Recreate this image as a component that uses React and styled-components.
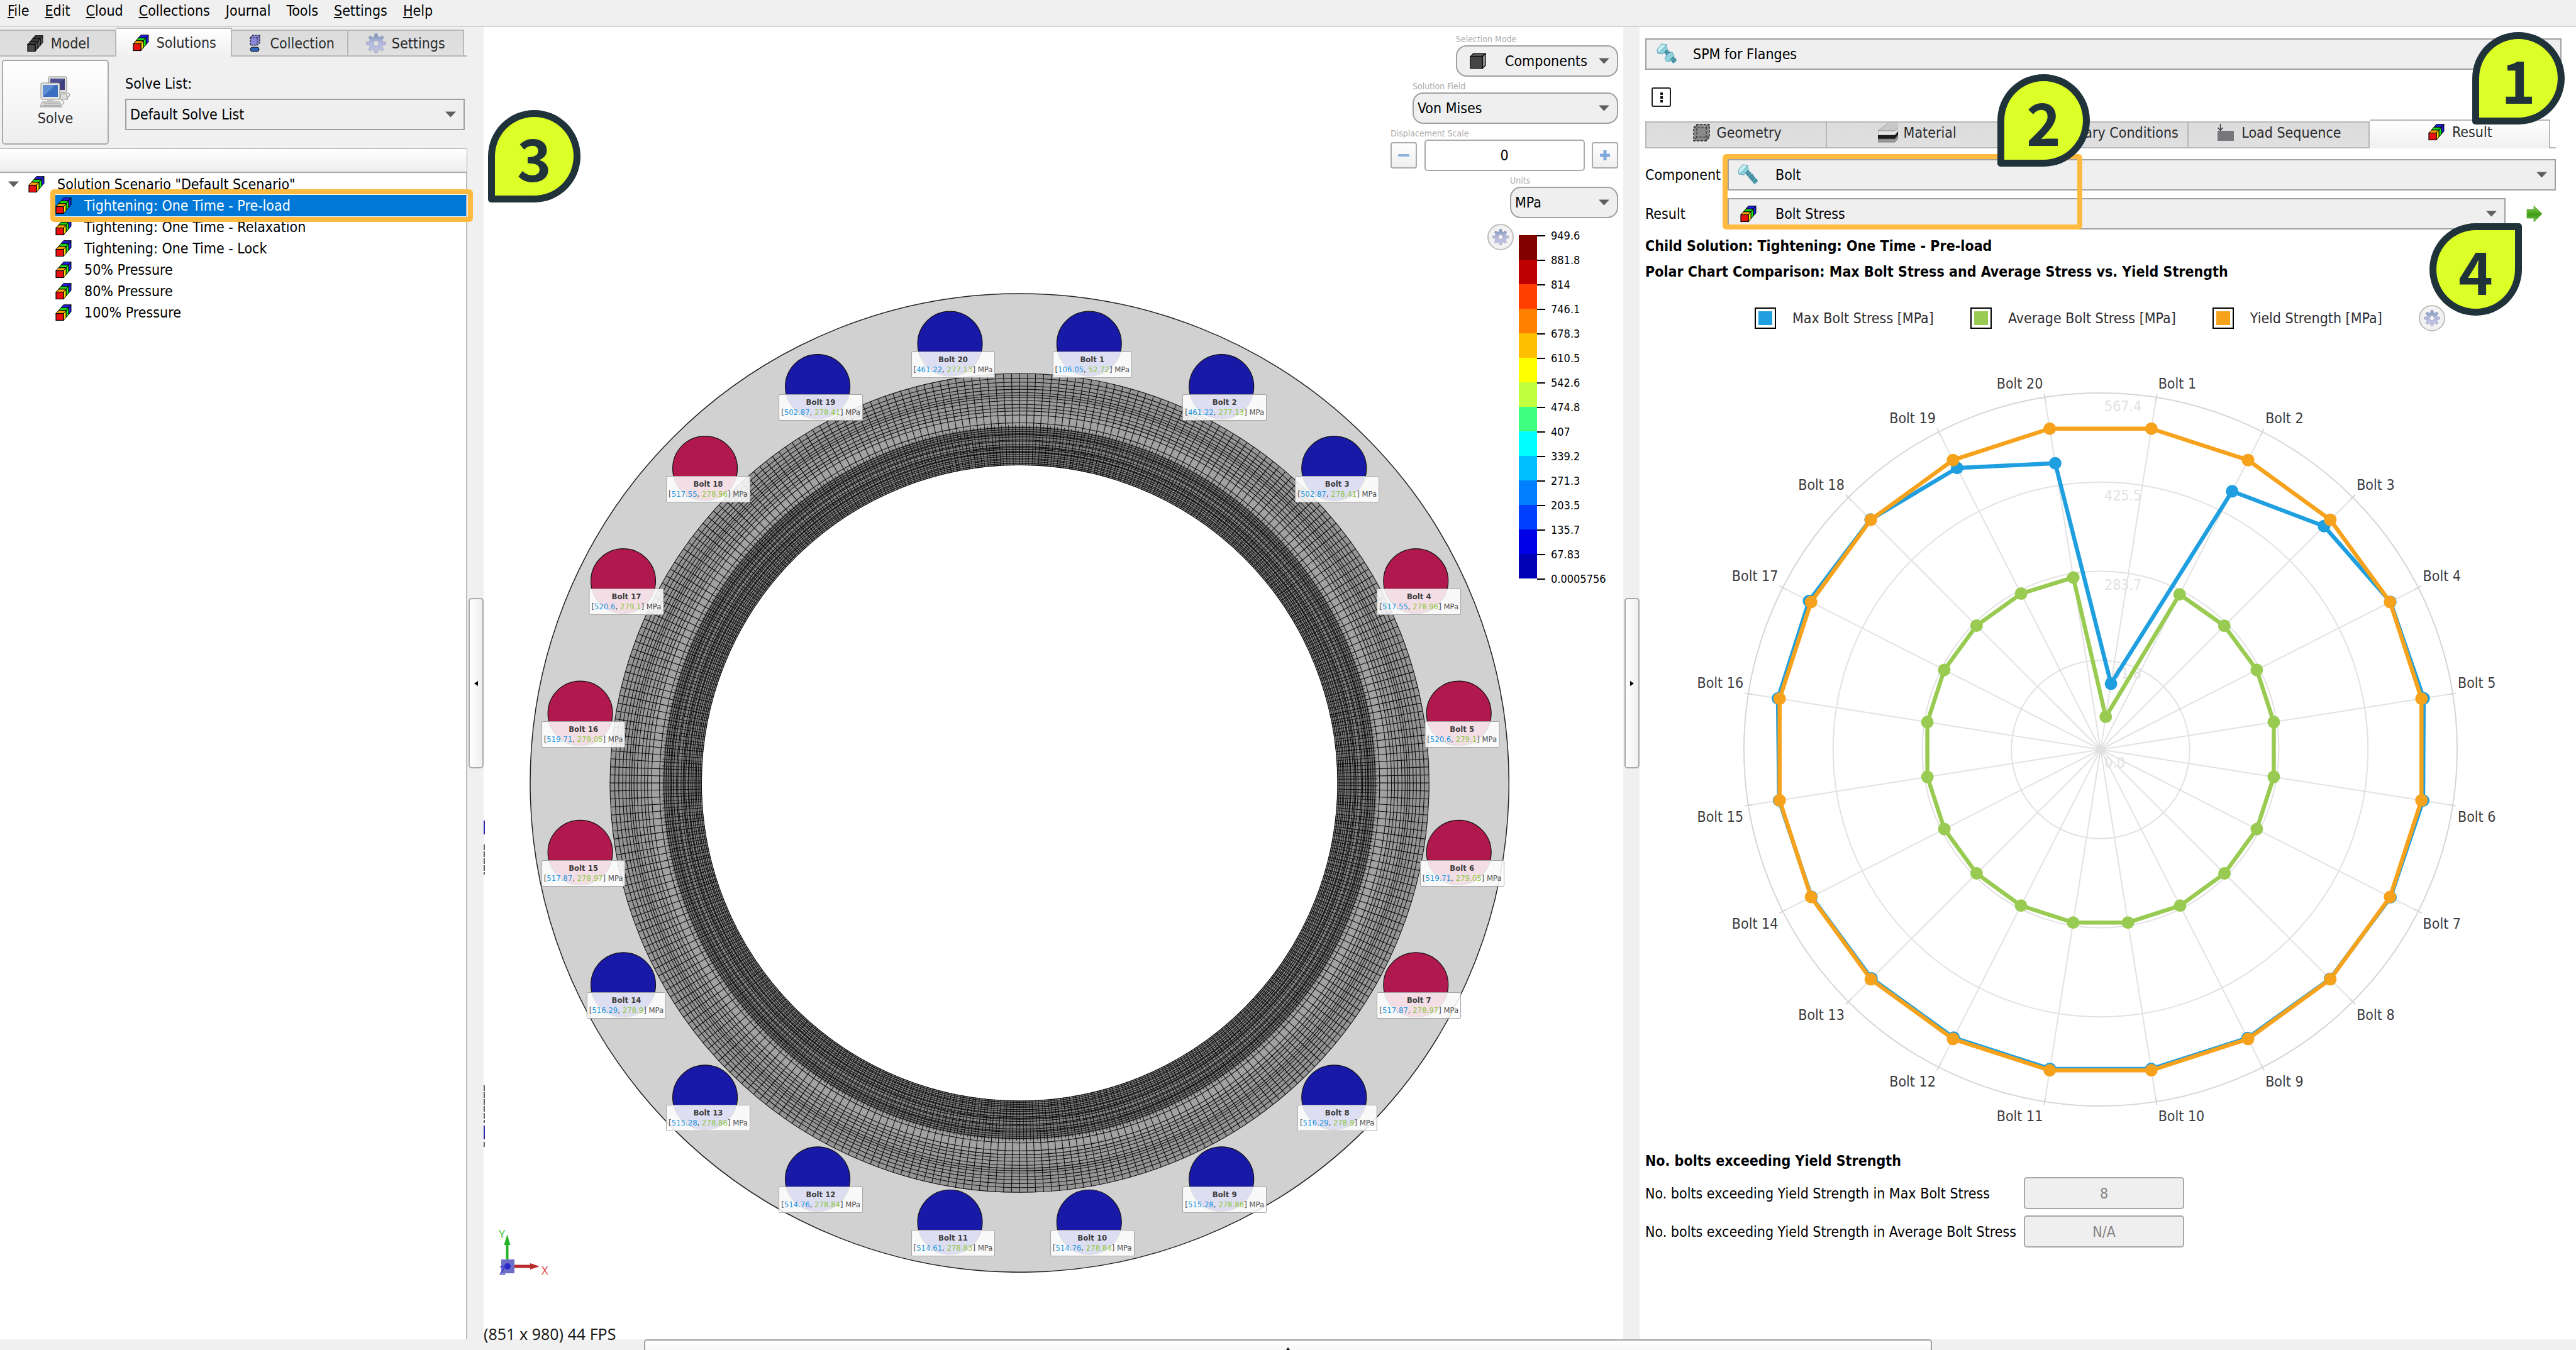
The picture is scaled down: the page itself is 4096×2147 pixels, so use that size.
import React, { useState } from "react";
import styled, { createGlobalStyle, css } from "styled-components";

const FONT = '"DejaVu Sans Condensed", "DejaVu Sans", "Noto Sans", sans-serif';

const GlobalStyle = createGlobalStyle`
  *, *::before, *::after { box-sizing: border-box; }
  body { margin: 0; background: #f0f0f0; }
  body, button, input, select {
    font-family: ${FONT};
    font-size: 23px;
    line-height: 34px;
    color: #000;
  }
`;

/* ---------- data ---------- */

const MAX = [106.05, 461.22, 502.87, 517.55, 520.6, 519.71, 517.87, 516.29, 515.28, 514.76,
  514.61, 514.76, 515.28, 516.29, 517.87, 519.71, 520.6, 517.55, 502.87, 461.22];
const AVG = [52.72, 277.13, 278.41, 278.96, 279.1, 279.05, 278.97, 278.9, 278.86, 278.84,
  278.83, 278.84, 278.86, 278.9, 278.97, 279.05, 279.1, 278.96, 278.41, 277.13];
const YIELD = 517;
const AXIS_MAX = 567.4;
const BOLTS = MAX.map((max, i) => ({
  name: `Bolt ${i + 1}`,
  max,
  avg: AVG[i],
  angle: ((i + 0.5) * 18 * Math.PI) / 180,
}));

const BLUE = "#1f9fdf";
const GREEN = "#99cb52";
const ORANGE = "#f6a21c";

const SCALE = [
  ["949.6", "#800000"], ["881.8", "#bf0000"], ["814", "#ff4000"], ["746.1", "#ff8000"],
  ["678.3", "#ffbf00"], ["610.5", "#ffff00"], ["542.6", "#bfff40"], ["474.8", "#40ff80"],
  ["407", "#00ffff"], ["339.2", "#00bfff"], ["271.3", "#0080ff"], ["203.5", "#0040ff"],
  ["135.7", "#0000e6"], ["67.83", "#0000b4"],
];

/* ---------- icons ---------- */

const CUBE_COLORS = {
  rainbow: { front: "#e81010", segs: [["#ffa800", "#ffe000"], ["#18d818", "#18f018"], ["#2020e0", "#2020e0"]] },
  dark: { front: "#474747", segs: [["#3c3c3c", "#5a5a5a"], ["#3c3c3c", "#5a5a5a"], ["#3c3c3c", "#5a5a5a"]] },
};

function CubesIcon({ variant = "rainbow" }) {
  const c = CUBE_COLORS[variant];
  return (
    <svg width="32" height="32" viewBox="-3 -3 32 32" aria-hidden="true">
      {[2, 1, 0].map((i) => {
        const x = 1 + i * 4;
        const y = 14.5 - i * 4.6;
        return (
          <g key={i} stroke="#000" strokeWidth="1" strokeLinejoin="round">
            <path d={`M${x} ${y}l4 -4.6h12l-4 4.6z`} fill={c.segs[i][0]} />
            <path d={`M${x + 12} ${y}l4 -4.6v11l-4 4.6z`} fill={c.segs[i][1]} />
          </g>
        );
      })}
      <rect x="1" y="14.5" width="12" height="11" fill={c.front} stroke="#000" strokeWidth="1.2" />
    </svg>
  );
}

function CollectionIcon() {
  return (
    <svg width="32" height="32" viewBox="0 0 32 32" aria-hidden="true">
      <path d="M9 7l4-4h11v12l-4 4H9z" fill="#8a86dc" stroke="#000" strokeWidth="1.2" strokeDasharray="3 1.6" />
      <path d="M9 7h11l4-4M20 7v12" fill="none" stroke="#222" strokeWidth="1" strokeDasharray="3 1.6" />
      <rect x="9" y="22" width="14" height="7" rx="3.5" fill="#2e62b4" stroke="#111" strokeWidth="1" />
    </svg>
  );
}

function gearPath(c, outer, inner, teeth) {
  const pts = [];
  for (let i = 0; i < teeth; i += 1) {
    [[-0.32, inner], [-0.17, outer], [0.17, outer], [0.32, inner]].forEach(([o, r]) => {
      const a = ((i + o) * 2 * Math.PI) / teeth - Math.PI / 2;
      pts.push(`${(c + r * Math.cos(a)).toFixed(2)} ${(c + r * Math.sin(a)).toFixed(2)}`);
    });
  }
  return `M${pts.join("L")}Z`;
}

function GearIcon({ size = 32 }) {
  return (
    <svg width={size} height={size} viewBox="0 0 32 32" aria-hidden="true">
      <defs>
        <linearGradient id="gear" x1="0" y1="0" x2="0" y2="1">
          <stop offset="0" stopColor="#7b92b8" />
          <stop offset="0.45" stopColor="#b0b8da" />
          <stop offset="1" stopColor="#cac4e6" />
        </linearGradient>
      </defs>
      <path
        fillRule="evenodd"
        d={`${gearPath(16, 15.4, 11, 8)}M16 11.5a4.5 4.5 0 1 0 .01 0Z`}
        fill="url(#gear)"
        stroke="#949cbc"
        strokeWidth="0.8"
      />
    </svg>
  );
}

function ComputersIcon() {
  return (
    <svg width="50" height="50" viewBox="0 0 50 50" aria-hidden="true">
      <path d="M34 28l8 0 3 9H32z" fill="#dcdcd8" stroke="#8c8c88" />
      <path d="M43 27c6 0 6 6 1 6" fill="none" stroke="#aaa" strokeWidth="1.5" />
      <rect x="14" y="1" width="29" height="25" rx="2" fill="#dcdcd8" stroke="#8c8c88" />
      <rect x="17" y="4" width="23" height="18" fill="#3d3d80" />
      <path d="M17 22V4h23z" fill="#5c5ca0" opacity="0.6" />
      <path d="M4 41h28l3 8H1z" fill="#dcdcd8" stroke="#8c8c88" />
      <path d="M6 44h25M5 46.5h27" stroke="#999" />
      <path d="M34 39c6 0 6 6 1 6" fill="none" stroke="#aaa" strokeWidth="1.5" />
      <rect x="2" y="11" width="30" height="26" rx="2" fill="#e6e6e2" stroke="#8c8c88" />
      <rect x="5" y="14" width="24" height="19" fill="#3a6fc0" />
      <path d="M5 33V14h20z" fill="#7ba4e0" opacity="0.6" />
      <path d="M12 37h10v4H12z" fill="#c4c4c0" />
    </svg>
  );
}

function BoltIcon({ nut = false }) {
  return (
    <svg width="34" height="34" viewBox="0 0 34 34" aria-hidden="true">
      <g stroke="#4f9db0" strokeWidth="0.8" strokeLinejoin="round">
        <path d="M11 13l5-4 16 18-5 5z" fill="#5aa5b8" />
        <path d="M1 10L8 1l8 1 1 7-7 8-8-1z" fill="#8fd0dc" />
        <path d="M8 1l8 1-8 9-6 5-1-6z" fill="#c6edf2" />
      </g>
      {nut && <path d="M13 24l5-9 7-1 3 6-5 8-7 1z" fill="#8fd0dc" stroke="#4f9db0" strokeWidth="0.8" />}
      <path d="M22 26l6-5M25 29l6-5" stroke="#2f7486" strokeWidth="1.3" />
      <path d="M13 15l5-5M15 18l6-5" stroke="#2f7486" strokeWidth="1.3" />
      {!nut && <path d="M18 21l6-5M20 23.500l6-5" stroke="#2f7486" strokeWidth="1.3" />}
    </svg>
  );
}

function GeometryIcon() {
  return (
    <svg width="32" height="32" viewBox="0 0 32 32" aria-hidden="true">
      <path d="M4 8l5-5h20v20l-5 6H4z" fill="#8a8a8a" stroke="#222" strokeWidth="1.4" strokeDasharray="4 2" />
      <path d="M4 8h20l5-5M24 8v21M9 3v20h20M9 23l-5 6" fill="none" stroke="#333" strokeWidth="1.2" strokeDasharray="4 2" />
    </svg>
  );
}

function MaterialIcon() {
  return (
    <svg width="32" height="32" viewBox="0 0 32 32" aria-hidden="true">
      <path d="M0 13L17 0h15v8l-5 5z" fill="#c8c8c8" />
      <path d="M0 13L17 0" stroke="#999" strokeWidth="0.8" />
      <path d="M0 13h27l5-5v6l-5 6H0z" fill="#e6e6e6" stroke="#777" strokeWidth="0.8" />
      <path d="M0 20h27l5-6v6l-5 6H0z" fill="#1c1c1c" />
      <path d="M0 26h27l5-6v5l-5 6H0z" fill="#9a9a9a" stroke="#666" strokeWidth="0.8" />
    </svg>
  );
}

function LoadIcon() {
  return (
    <svg width="32" height="32" viewBox="0 0 32 32" aria-hidden="true">
      <rect x="3" y="13" width="26" height="16" fill="#77777b" />
      <path d="M7.500 2v10M3.500 8l4 4.500 4-4.500" fill="none" stroke="#333" strokeWidth="1.4" />
    </svg>
  );
}

function BoxIcon() {
  return (
    <svg width="26" height="26" viewBox="0 0 26 26" aria-hidden="true">
      <g stroke="#000" strokeWidth="1.2" strokeLinejoin="round">
        <path d="M1 6l5-5h19l-5 5z" fill="#555" />
        <path d="M20 6l5-5v19l-5 5z" fill="#8a8a8a" />
        <path d="M1 6h19v19H1z" fill="#444" />
      </g>
    </svg>
  );
}

function GoIcon() {
  return (
    <svg width="26" height="26" viewBox="0 0 26 26" aria-hidden="true">
      <defs>
        <linearGradient id="go" x1="0" y1="0" x2="0" y2="1">
          <stop offset="0" stopColor="#8ed05a" />
          <stop offset="0.55" stopColor="#3c9c14" />
          <stop offset="1" stopColor="#7cc850" />
        </linearGradient>
      </defs>
      <path d="M1 6h11V0l13 13-13 13v-6H1z" fill="url(#go)" stroke="#5fae38" strokeWidth="0.8" />
    </svg>
  );
}

const ArrowSvg = styled.svg`
  flex: none;
  pointer-events: none;
`;

function DownArrow() {
  return (
    <ArrowSvg width="17" height="10" viewBox="0 0 17 10" aria-hidden="true">
      <path d="M0 0.500h17L8.500 9.500z" fill="#5e5e5e" />
    </ArrowSvg>
  );
}

/* ---------- shell ---------- */

const Shell = styled.div`
  min-height: 100vh;
  display: flex;
  flex-direction: column;
  background: #f0f0f0;
`;

const MenuBar = styled.nav`
  display: flex;
  gap: 25px;
  padding: 0 12px 7px;
  border-bottom: 2px solid #d4d4d4;
`;

const MenuItem = styled.button`
  padding: 0;
  border: 0;
  background: none;
  &::first-letter { text-decoration: ${(p) => (p.$plain ? "none" : "underline")}; }
`;

const Columns = styled.main`
  flex: 1;
  display: grid;
  grid-template-columns: minmax(0, 743fr) 26px minmax(0, 1812fr) 26px minmax(0, 1489fr);
`;

const Gutter = styled.div`
  display: flex;
  flex-direction: column;
  justify-content: center;
  align-items: flex-end;
`;

const GutterHandle = styled.button`
  width: 24px;
  height: 271px;
  padding: 0;
  display: grid;
  place-items: center;
  border: 2px solid #aaa;
  border-radius: 5px;
  background: linear-gradient(90deg, #fff, #efefef);
`;

const BottomBar = styled.footer`
  height: 17px;
  display: flex;
  justify-content: center;
`;

const BottomHandle = styled.button`
  width: 50%;
  padding: 0;
  display: grid;
  place-items: end center;
  border: 2px solid #a0a0a0;
  border-bottom: 0;
  border-radius: 5px 5px 0 0;
  background: linear-gradient(#fff, #f6f6f6);
`;

/* ---------- annotations ---------- */

const Badge = styled.span`
  position: absolute;
  z-index: 5;
  width: 147px;
  height: 147px;
  display: grid;
  place-items: center;
  border: 11px solid #20333b;
  border-radius: ${(p) => (p.$corner === "top" ? "50% 5px 50% 50%" : "50% 50% 50% 5px")};
  background: #dcff28;
  color: #20333b;
  font-family: "Noto Sans CJK SC", "Noto Sans", sans-serif;
  font-weight: 700;
  font-size: 93px;
  line-height: 93px;
`;

const BadgeOne = styled(Badge)` top: 8px; right: 18px; `;
const BadgeTwo = styled(Badge)` top: 75px; left: 569px; `;
const BadgeThree = styled(Badge)` top: 132px; left: 7px; `;
const BadgeFour = styled(Badge)` top: 312px; right: 86px; `;

const Highlight = styled.span`
  position: absolute;
  z-index: 3;
  border: 8px solid #ffbb40;
  border-radius: 6px;
  pointer-events: none;
`;

/* ---------- shared controls ---------- */

const TabBar = styled.div`
  display: flex;
  align-items: flex-end;
  height: 46px;
  padding-right: ${(p) => p.$end}px;
  border-bottom: 2px solid #b8b8b8;
`;

const Tab = styled.button`
  flex: 1;
  min-width: 0;
  height: 41px;
  padding: 0 0 ${(p) => p.$lift || 0}px;
  display: flex;
  align-items: center;
  justify-content: center;
  gap: 9px;
  border: solid #b8b8b8;
  border-width: 2px 2px 0 0;
  background: linear-gradient(#dcdcdc, #e0e0e0);
  color: #2b2b2b;
  white-space: nowrap;
  svg { flex: none; }
  ${(p) => p.$first && css`border-left-width: 2px;`}
  ${(p) => p.$active && css`
    height: 46px;
    margin-bottom: -2px;
    background: linear-gradient(#fff, #f0f0f0);
  `}
`;

const SelectBox = styled.div`
  display: flex;
  align-items: center;
  height: 50px;
  width: 100%;
  padding: 0 12px 0 ${(p) => p.$pad || 6}px;
  border: 2px solid #a0a0a0;
  background: #efefef;
  ${(p) => p.$round && css`border-radius: 17px;`}
`;

const SelectIcon = styled.span`
  display: flex;
  flex: none;
  margin-right: ${(p) => p.$gap}px;
`;

const Select = styled.select`
  flex: 1;
  min-width: 0;
  height: 100%;
  padding: 0;
  border: 0;
  background: none;
  appearance: none;
`;

function IconSelect({ id, label, value, icon, gap, ...box }) {
  return (
    <SelectBox {...box}>
      {icon && <SelectIcon $gap={gap}>{icon}</SelectIcon>}
      <Select id={id} aria-label={label} defaultValue={value}>
        <option>{value}</option>
      </Select>
      <DownArrow />
    </SelectBox>
  );
}

/* ---------- left panel ---------- */

const LeftPanel = styled.section`
  display: flex;
  flex-direction: column;
  padding-top: 1px;
`;

const SolveRow = styled.div`
  display: flex;
  gap: 26px;
  padding: 5px 4px 6px 3px;
`;

const SolveButton = styled.button`
  width: 170px;
  height: 135px;
  padding: 0;
  display: flex;
  flex-direction: column;
  align-items: center;
  justify-content: center;
  border: 2px solid #aaa;
  border-radius: 5px;
  background: linear-gradient(#fff, #eee);
  color: #2b2b2b;
`;

const SolveList = styled.div`
  flex: 1;
  display: flex;
  flex-direction: column;
  gap: 7px;
  padding-top: 21px;
`;

const TreeHeader = styled.div`
  height: 39px;
  border: solid #a8a8a8;
  border-width: 1px 1px 2px 0;
  background: linear-gradient(#fff, #eee);
`;

const Tree = styled.ul`
  flex: 1;
  margin: 0;
  padding: 1px 0 0;
  list-style: none;
  border-right: 2px solid #bcbcbc;
  background: #fff;
`;

const TreeItem = styled.li`
  position: relative;
  padding-left: ${(p) => (p.$root ? 15 : 87)}px;
`;

const TreeRow = styled.button`
  width: 100%;
  height: 34px;
  padding: 0;
  display: flex;
  align-items: center;
  gap: 17px;
  border: 0;
  text-align: left;
  background: ${(p) => (p.$selected ? "#0078d7" : "none")};
  color: ${(p) => (p.$selected ? "#fff" : "#000")};
  svg + svg { margin-left: -5px; }
  svg { margin-left: -2px; }
`;

const TreeHighlight = styled(Highlight)` inset: -9px -11px -9px 80px; `;

const STEPS = ["Tightening: One Time - Pre-load", "Tightening: One Time - Relaxation",
  "Tightening: One Time - Lock", "50% Pressure", "80% Pressure", "100% Pressure"];

function Left() {
  const [selected, setSelected] = useState(0);
  return (
    <LeftPanel>
      <TabBar role="tablist" $end={5}>
        <Tab role="tab"><CubesIcon variant="dark" />Model</Tab>
        <Tab role="tab" $active aria-selected="true"><CubesIcon />Solutions</Tab>
        <Tab role="tab"><CollectionIcon />Collection</Tab>
        <Tab role="tab"><GearIcon />Settings</Tab>
      </TabBar>
      <SolveRow>
        <SolveButton><ComputersIcon />Solve</SolveButton>
        <SolveList>
          <label htmlFor="solve-list">Solve List:</label>
          <IconSelect id="solve-list" value="Default Solve List" />
        </SolveList>
      </SolveRow>
      <TreeHeader />
      <Tree>
        <TreeItem $root>
          <TreeRow>
            <DownArrow />
            <CubesIcon />
            Solution Scenario "Default Scenario"
          </TreeRow>
        </TreeItem>
        {STEPS.map((s, i) => (
          <TreeItem key={s}>
            <TreeRow $selected={selected === i} onClick={() => setSelected(i)}>
              <CubesIcon />
              {s}
            </TreeRow>
            {i === 0 && <TreeHighlight />}
          </TreeItem>
        ))}
      </Tree>
    </LeftPanel>
  );
}

/* ---------- 3D viewport ---------- */

const Viewport = styled.section`
  position: relative;
  display: flex;
  flex-direction: column;
  background: #fff;
`;

const Stage = styled.div`
  position: relative;
  width: 86%;
  margin: 423px 0 0 73px;
  aspect-ratio: 1;
`;

const StageSvg = styled.svg`
  display: block;
  width: 100%;
  height: 100%;
`;

const BoltTag = styled.div`
  position: absolute;
  display: flex;
  flex-direction: column;
  align-items: center;
  margin: 12px 0 0 5px;
  padding: 4px 3px;
  transform: translateX(-50%);
  border: 1px solid #a4a4a4;
  border-radius: 2px;
  background: rgba(255, 255, 255, 0.86);
  color: #505050;
  font-size: 13px;
  line-height: 16px;
  white-space: nowrap;
  strong { color: #3c3c3c; }
`;

const Value = styled.span`
  color: ${(p) => p.$color};
`;

const RINGS = [385, 391, 398, 405, 410, 418, 425, 433, 436, 445, 451, 455, 463, 475, 480, 492, 500,
  504, 512, 520, 528, 545, 575, 590, 602, 615, 630, 642, 651, 660, 673, 685, 700, 715, 733]
  .map((x) => 345.3 + x * 0.4182);

const BANDS = [[652, "#959595"], [612, "#9a9a9a"], [592, "#a2a2a2"], [568, "#7c7c7c"], [544, "#868686"]];

function radials(count, r1, r2, phase) {
  let d = "";
  for (let i = 0; i < count; i += 1) {
    const a = ((i + phase) * 2 * Math.PI) / count;
    const s = Math.sin(a);
    const c = Math.cos(a);
    d += `M${(r1 * s).toFixed(1)} ${(-r1 * c).toFixed(1)}L${(r2 * s).toFixed(1)} ${(-r2 * c).toFixed(1)}`;
  }
  return d;
}

function Flange() {
  return (
    <Stage>
      <StageSvg viewBox="-780 -780 1560 1560" role="img" aria-label="Flange mesh">
        <circle r="779" fill="#d1d1d1" stroke="#222" strokeWidth="1.500" />
        {BANDS.map(([r, fill]) => <circle key={r} r={r} fill={fill} />)}
        <circle r="506" fill="#fff" />
        <g fill="none" stroke="#000" strokeWidth="1.1" opacity="0.9">
          {RINGS.map((r) => <circle key={r} r={r} />)}
          <path d={radials(320, 506, 652, 0)} />
          <path d={radials(320, 506, 570, 0.42)} opacity="0.8" />
        </g>
        {BOLTS.map((b) => (
          <circle
            key={b.name}
            cx={708 * Math.sin(b.angle)}
            cy={-708 * Math.cos(b.angle)}
            r="51.500"
            fill={b.max > YIELD ? "#b0184e" : "#1919a8"}
            stroke="#111"
            strokeWidth="1.200"
          />
        ))}
      </StageSvg>
      {BOLTS.map((b) => (
        <BoltTag
          key={b.name}
          style={{
            left: `${50 + 45.385 * Math.sin(b.angle)}%`,
            top: `${50 - 45.385 * Math.cos(b.angle)}%`,
          }}
        >
          <strong>{b.name}</strong>
          <span>
            [<Value $color="#1c96e0">{b.max}</Value>, <Value $color="#8fc63f">{b.avg}</Value>] MPa
          </span>
        </BoltTag>
      ))}
    </Stage>
  );
}

const Controls = styled.div`
  position: absolute;
  top: 9px;
  right: 8px;
  display: flex;
  flex-direction: column;
  align-items: flex-end;
  gap: 5px;
`;

const Field = styled.div`
  width: ${(p) => p.$width}px;
`;

const SmallLabel = styled.label`
  display: block;
  color: #acacac;
  font-size: 14px;
  line-height: 20px;
`;

const StepRow = styled.div`
  display: flex;
  align-items: center;
  justify-content: space-between;
`;

const StepButton = styled.button`
  width: 42px;
  height: 42px;
  padding: 0;
  display: grid;
  place-items: center;
  border: 2px solid #aaa;
  border-radius: 4px;
  background: linear-gradient(#fff, #efefef);
`;

const StepInput = styled.input`
  width: 255px;
  height: 50px;
  border: 2px solid #aaa;
  border-radius: 5px;
  background: #fff;
  text-align: center;
`;

const RoundButton = styled.button`
  width: 42px;
  height: 42px;
  padding: 0;
  display: grid;
  place-items: center;
  border: 2px solid #bdbdbd;
  border-radius: 50%;
  background: #f2f2f2;
`;

const LegendRow = styled.div`
  display: flex;
  align-items: flex-start;
  gap: 8px;
  width: 208px;
  padding-top: 4px;
`;

const ScaleList = styled.ul`
  margin: 18px 0 0;
  padding: 0;
  list-style: none;
  font-size: 18px;
  line-height: 18px;
`;

const ScaleItem = styled.li`
  display: flex;
  height: ${(p) => (p.$last ? 2 : 39)}px;
`;

const Swatch = styled.span`
  width: 29px;
  background: ${(p) => p.$color};
`;

const Tick = styled.span`
  width: 13px;
  height: 2px;
  margin-right: 9px;
  background: #000;
`;

const ScaleLabel = styled.span`
  margin-top: -8px;
`;

function ViewControls() {
  return (
    <Controls>
      <Field $width={258}>
        <SmallLabel htmlFor="mode">Selection Mode</SmallLabel>
        <IconSelect id="mode" value="Components" icon={<BoxIcon />} gap={30} $round $pad={20} />
      </Field>
      <Field $width={327}>
        <SmallLabel htmlFor="field">Solution Field</SmallLabel>
        <IconSelect id="field" value="Von Mises" $round />
      </Field>
      <Field $width={362}>
        <SmallLabel htmlFor="disp">Displacement Scale</SmallLabel>
        <StepRow>
          <StepButton aria-label="Decrease">
            <svg width="18" height="18"><path d="M0 9h18" stroke="#8db4e0" strokeWidth="4" /></svg>
          </StepButton>
          <StepInput id="disp" defaultValue="0" />
          <StepButton aria-label="Increase">
            <svg width="16" height="16"><path d="M0 8h16M8 0v16" stroke="#7fa8dc" strokeWidth="5" /></svg>
          </StepButton>
        </StepRow>
      </Field>
      <Field $width={172}>
        <SmallLabel htmlFor="units">Units</SmallLabel>
        <IconSelect id="units" value="MPa" $round />
      </Field>
      <LegendRow>
        <RoundButton aria-label="Legend settings"><GearIcon size={26} /></RoundButton>
        <ScaleList>
          {SCALE.map(([label, color]) => (
            <ScaleItem key={label}>
              <Swatch $color={color} />
              <Tick />
              <ScaleLabel>{label}</ScaleLabel>
            </ScaleItem>
          ))}
          <ScaleItem $last>
            <Swatch $color="transparent" />
            <Tick />
            <ScaleLabel>0.0005756</ScaleLabel>
          </ScaleItem>
        </ScaleList>
      </LegendRow>
    </Controls>
  );
}

const EdgeMarks = styled.svg`
  position: absolute;
  left: 0;
  top: 0;
`;

const Triad = styled.svg`
  position: absolute;
  left: 20px;
  bottom: 87px;
`;

const Fps = styled.p`
  margin: auto 0 -4px;
  color: #1c1c1c;
  font-family: "Noto Sans", sans-serif;
  font-size: 25px;
  line-height: 26px;
`;

function View() {
  return (
    <Viewport>
      <Flange />
      <EdgeMarks width="3" height="2087" aria-hidden="true">
        <path d="M1 1262v22M1 1747v22" stroke="#2a2ab0" strokeWidth="2" />
        <path d="M1 1300v48M1 1683v60M1 1773v8" stroke="#333" strokeWidth="1.500" strokeDasharray="9 2" />
      </EdgeMarks>
      <ViewControls />
      <Triad width="100" height="106" viewBox="0 -16 100 106" role="img" aria-label="Axes" fontFamily="Noto Sans, sans-serif" fontSize="18">
        <path d="M17.500 56V24" stroke="#27b327" strokeWidth="4" />
        <path d="M17.500 10l5 17h-10z" fill="#27b327" />
        <path d="M28 61h30" stroke="#b92b2b" strokeWidth="5" />
        <path d="M69 61l-15-5v10z" fill="#b92b2b" />
        <rect x="8" y="50" width="21" height="22" fill="#6d6dc8" />
        <circle cx="18" cy="61" r="5" fill="#2a2ac8" />
        <text x="4" y="16" fill="#48c848">Y</text>
        <text x="72" y="74" fill="#e04848">X</text>
        <text x="5" y="74" fill="#3c3cc8">Z</text>
      </Triad>
      <Fps>(851 x 980) 44 FPS</Fps>
      <BadgeThree>3</BadgeThree>
    </Viewport>
  );
}

/* ---------- right panel ---------- */

const RightPanel = styled.section`
  position: relative;
  padding: 18px 23px 0 9px;
  background: #fff;
`;

const MoreButton = styled.button`
  display: grid;
  place-items: center;
  width: 31px;
  height: 31px;
  margin: 28px 0 20px 10px;
  padding: 0;
  border: 2px solid #222;
  border-radius: 3px;
  background: #fff;
`;

const Body = styled.div`
  padding-right: 9px;
`;

const Form = styled.div`
  position: relative;
  display: grid;
  grid-template-columns: 131px 1fr;
  gap: 12px 0;
  align-items: center;
  margin: 17px 0 9px;
`;

const ResultRow = styled.div`
  display: flex;
  align-items: center;
  gap: 33px;
  padding-right: 21px;
`;

const GoButton = styled.button`
  display: grid;
  padding: 0;
  border: 0;
  background: none;
`;

const FormHighlight = styled(Highlight)`
  top: -8px;
  bottom: 0;
  left: 123px;
  width: 572px;
`;

const Title = styled.h2`
  margin: 0 0 7px;
  font-size: 23px;
  line-height: 34px;
  font-weight: 700;
`;

const ChartLegend = styled.div`
  display: flex;
  align-items: center;
  gap: 58px;
  margin: 36px 0 32px;
  padding-left: 174px;
  color: #2f2f33;
`;

const LegendItem = styled.span`
  display: flex;
  align-items: center;
  gap: 26px;
`;

const LegendSwatch = styled.span`
  width: 34px;
  height: 34px;
  border: 2px solid #000;
  background: ${(p) => p.$color};
  box-shadow: inset 0 0 0 4px #fff;
`;

const ChartSvg = styled.svg`
  display: block;
  width: 100%;
  margin-bottom: 10px;
  font-family: ${FONT};
  font-size: 23px;
`;

const Stats = styled.div`
  display: grid;
  grid-template-columns: max-content 255px;
  gap: 10px 12px;
  align-items: center;
  margin-top: 9px;
`;

const StatInput = styled.input`
  width: 100%;
  height: 51px;
  padding: 0;
  border: 2px solid #a8a8a8;
  border-radius: 5px;
  background: #efefef;
  color: #858585;
  text-align: center;
`;

const CX = 724;
const CY = 633;
const R = 567;

function at(angle, r) {
  return [CX + r * Math.sin(angle), CY - r * Math.cos(angle)];
}

function Series({ values, color }) {
  const pts = values.map((v, i) => at(BOLTS[i].angle, (v / AXIS_MAX) * R));
  return (
    <g>
      <polygon points={pts.map((p) => p.join(",")).join(" ")} fill="none" stroke={color} strokeWidth="6.5" strokeLinejoin="round" />
      {pts.map(([x, y], i) => <circle key={i} cx={x} cy={y} r="10" fill={color} />)}
    </g>
  );
}

function PolarChart() {
  return (
    <ChartSvg viewBox="0 0 1448 1260" role="img" aria-label="Polar chart of bolt stress">
      <g fill="none" stroke="#e2e2e2" strokeWidth="2">
        {[1, 2, 3].map((k) => <circle key={k} cx={CX} cy={CY} r={(R * k) / 4} />)}
        {BOLTS.map((b) => {
          const [x, y] = at(b.angle, R);
          return <path key={b.name} d={`M${CX} ${CY}L${x} ${y}`} />;
        })}
      </g>
      <g fill="none" stroke="#d6d6d6" strokeWidth="2">
        <circle cx={CX} cy={CY} r={R} />
        {BOLTS.map((b) => {
          const [x1, y1] = at(b.angle, R - 6);
          const [x2, y2] = at(b.angle, R + 6);
          return <path key={b.name} d={`M${x1} ${y1}L${x2} ${y2}`} />;
        })}
      </g>
      <circle cx={CX} cy={CY} r="7" fill="#e0e0e0" />
      <g fill="#e2e2e2">
        {["0.0", "141.8", "283.7", "425.5", "567.4"].map((t, k) => (
          <text key={t} x={CX + 6} y={CY - (R * k) / 4 + 29}>{t}</text>
        ))}
      </g>
      <Series values={MAX} color={BLUE} />
      <Series values={AVG} color={GREEN} />
      <Series values={BOLTS.map(() => YIELD)} color={ORANGE} />
      <g fill="#3c3c40">
        {BOLTS.map((b) => {
          const [x, y] = at(b.angle, R + 6);
          const right = x > CX;
          return (
            <text key={b.name} x={x + (right ? 2 : -2)} y={y + (y < CY ? -8 : 25)} textAnchor={right ? "start" : "end"}>
              {b.name}
            </text>
          );
        })}
      </g>
    </ChartSvg>
  );
}

function Right() {
  return (
    <RightPanel>
      <IconSelect label="Plugin" value="SPM for Flanges" icon={<BoltIcon nut />} gap={24} $pad={16} />
      <MoreButton aria-label="More">
        <svg width="4" height="18"><path d="M2 1v4M2 7v4M2 13v4" stroke="#111" strokeWidth="4" /></svg>
      </MoreButton>
      <Body>
        <TabBar role="tablist" $end={9}>
          <Tab role="tab" $first $lift={8}><GeometryIcon />Geometry</Tab>
          <Tab role="tab" $lift={8}><MaterialIcon />Material</Tab>
          <Tab role="tab" $lift={8}><LoadIcon />Boundary Conditions</Tab>
          <Tab role="tab" $lift={8}><LoadIcon />Load Sequence</Tab>
          <Tab role="tab" $lift={8} $active aria-selected="true"><CubesIcon />Result</Tab>
        </TabBar>
        <Form>
          <label htmlFor="component">Component</label>
          <IconSelect id="component" value="Bolt" icon={<BoltIcon />} gap={26} $pad={14} />
          <label htmlFor="result">Result</label>
          <ResultRow>
            <IconSelect id="result" value="Bolt Stress" icon={<CubesIcon />} gap={27} $pad={15} />
            <GoButton aria-label="Go"><GoIcon /></GoButton>
          </ResultRow>
          <FormHighlight />
        </Form>
        <Title>Child Solution: Tightening: One Time - Pre-load</Title>
        <Title>Polar Chart Comparison: Max Bolt Stress and Average Stress vs. Yield Strength</Title>
        <ChartLegend>
          <LegendItem><LegendSwatch $color={BLUE} />Max Bolt Stress [MPa]</LegendItem>
          <LegendItem><LegendSwatch $color={GREEN} />Average Bolt Stress [MPa]</LegendItem>
          <LegendItem><LegendSwatch $color={ORANGE} />Yield Strength [MPa]</LegendItem>
          <RoundButton aria-label="Chart settings"><GearIcon size={26} /></RoundButton>
        </ChartLegend>
        <PolarChart />
        <Title>No. bolts exceeding Yield Strength</Title>
        <Stats>
          <label htmlFor="max-count">No. bolts exceeding Yield Strength in Max Bolt Stress</label>
          <StatInput id="max-count" value="8" disabled readOnly />
          <label htmlFor="avg-count">No. bolts exceeding Yield Strength in Average Bolt Stress</label>
          <StatInput id="avg-count" value="N/A" disabled readOnly />
        </Stats>
      </Body>
      <BadgeOne>1</BadgeOne>
      <BadgeTwo>2</BadgeTwo>
      <BadgeFour $corner="top">4</BadgeFour>
    </RightPanel>
  );
}

const MENUS = ["File", "Edit", "Cloud", "Collections", "Journal", "Tools", "Settings", "Help"];

export default function App() {
  return (
    <>
      <GlobalStyle />
      <Shell>
        <MenuBar>
          {MENUS.map((m) => <MenuItem key={m} $plain={m === "Tools"}>{m}</MenuItem>)}
        </MenuBar>
        <Columns>
          <Left />
          <Gutter>
            <GutterHandle aria-label="Collapse left panel">
              <svg width="6" height="8"><path d="M6 0v8L0 4z" /></svg>
            </GutterHandle>
          </Gutter>
          <View />
          <Gutter>
            <GutterHandle aria-label="Collapse right panel">
              <svg width="6" height="8"><path d="M0 0v8l6-4z" /></svg>
            </GutterHandle>
          </Gutter>
          <Right />
        </Columns>
        <BottomBar>
          <BottomHandle aria-label="Expand bottom panel">
            <svg width="8" height="6"><path d="M1 6h6L4 2z" /></svg>
          </BottomHandle>
        </BottomBar>
      </Shell>
    </>
  );
}
